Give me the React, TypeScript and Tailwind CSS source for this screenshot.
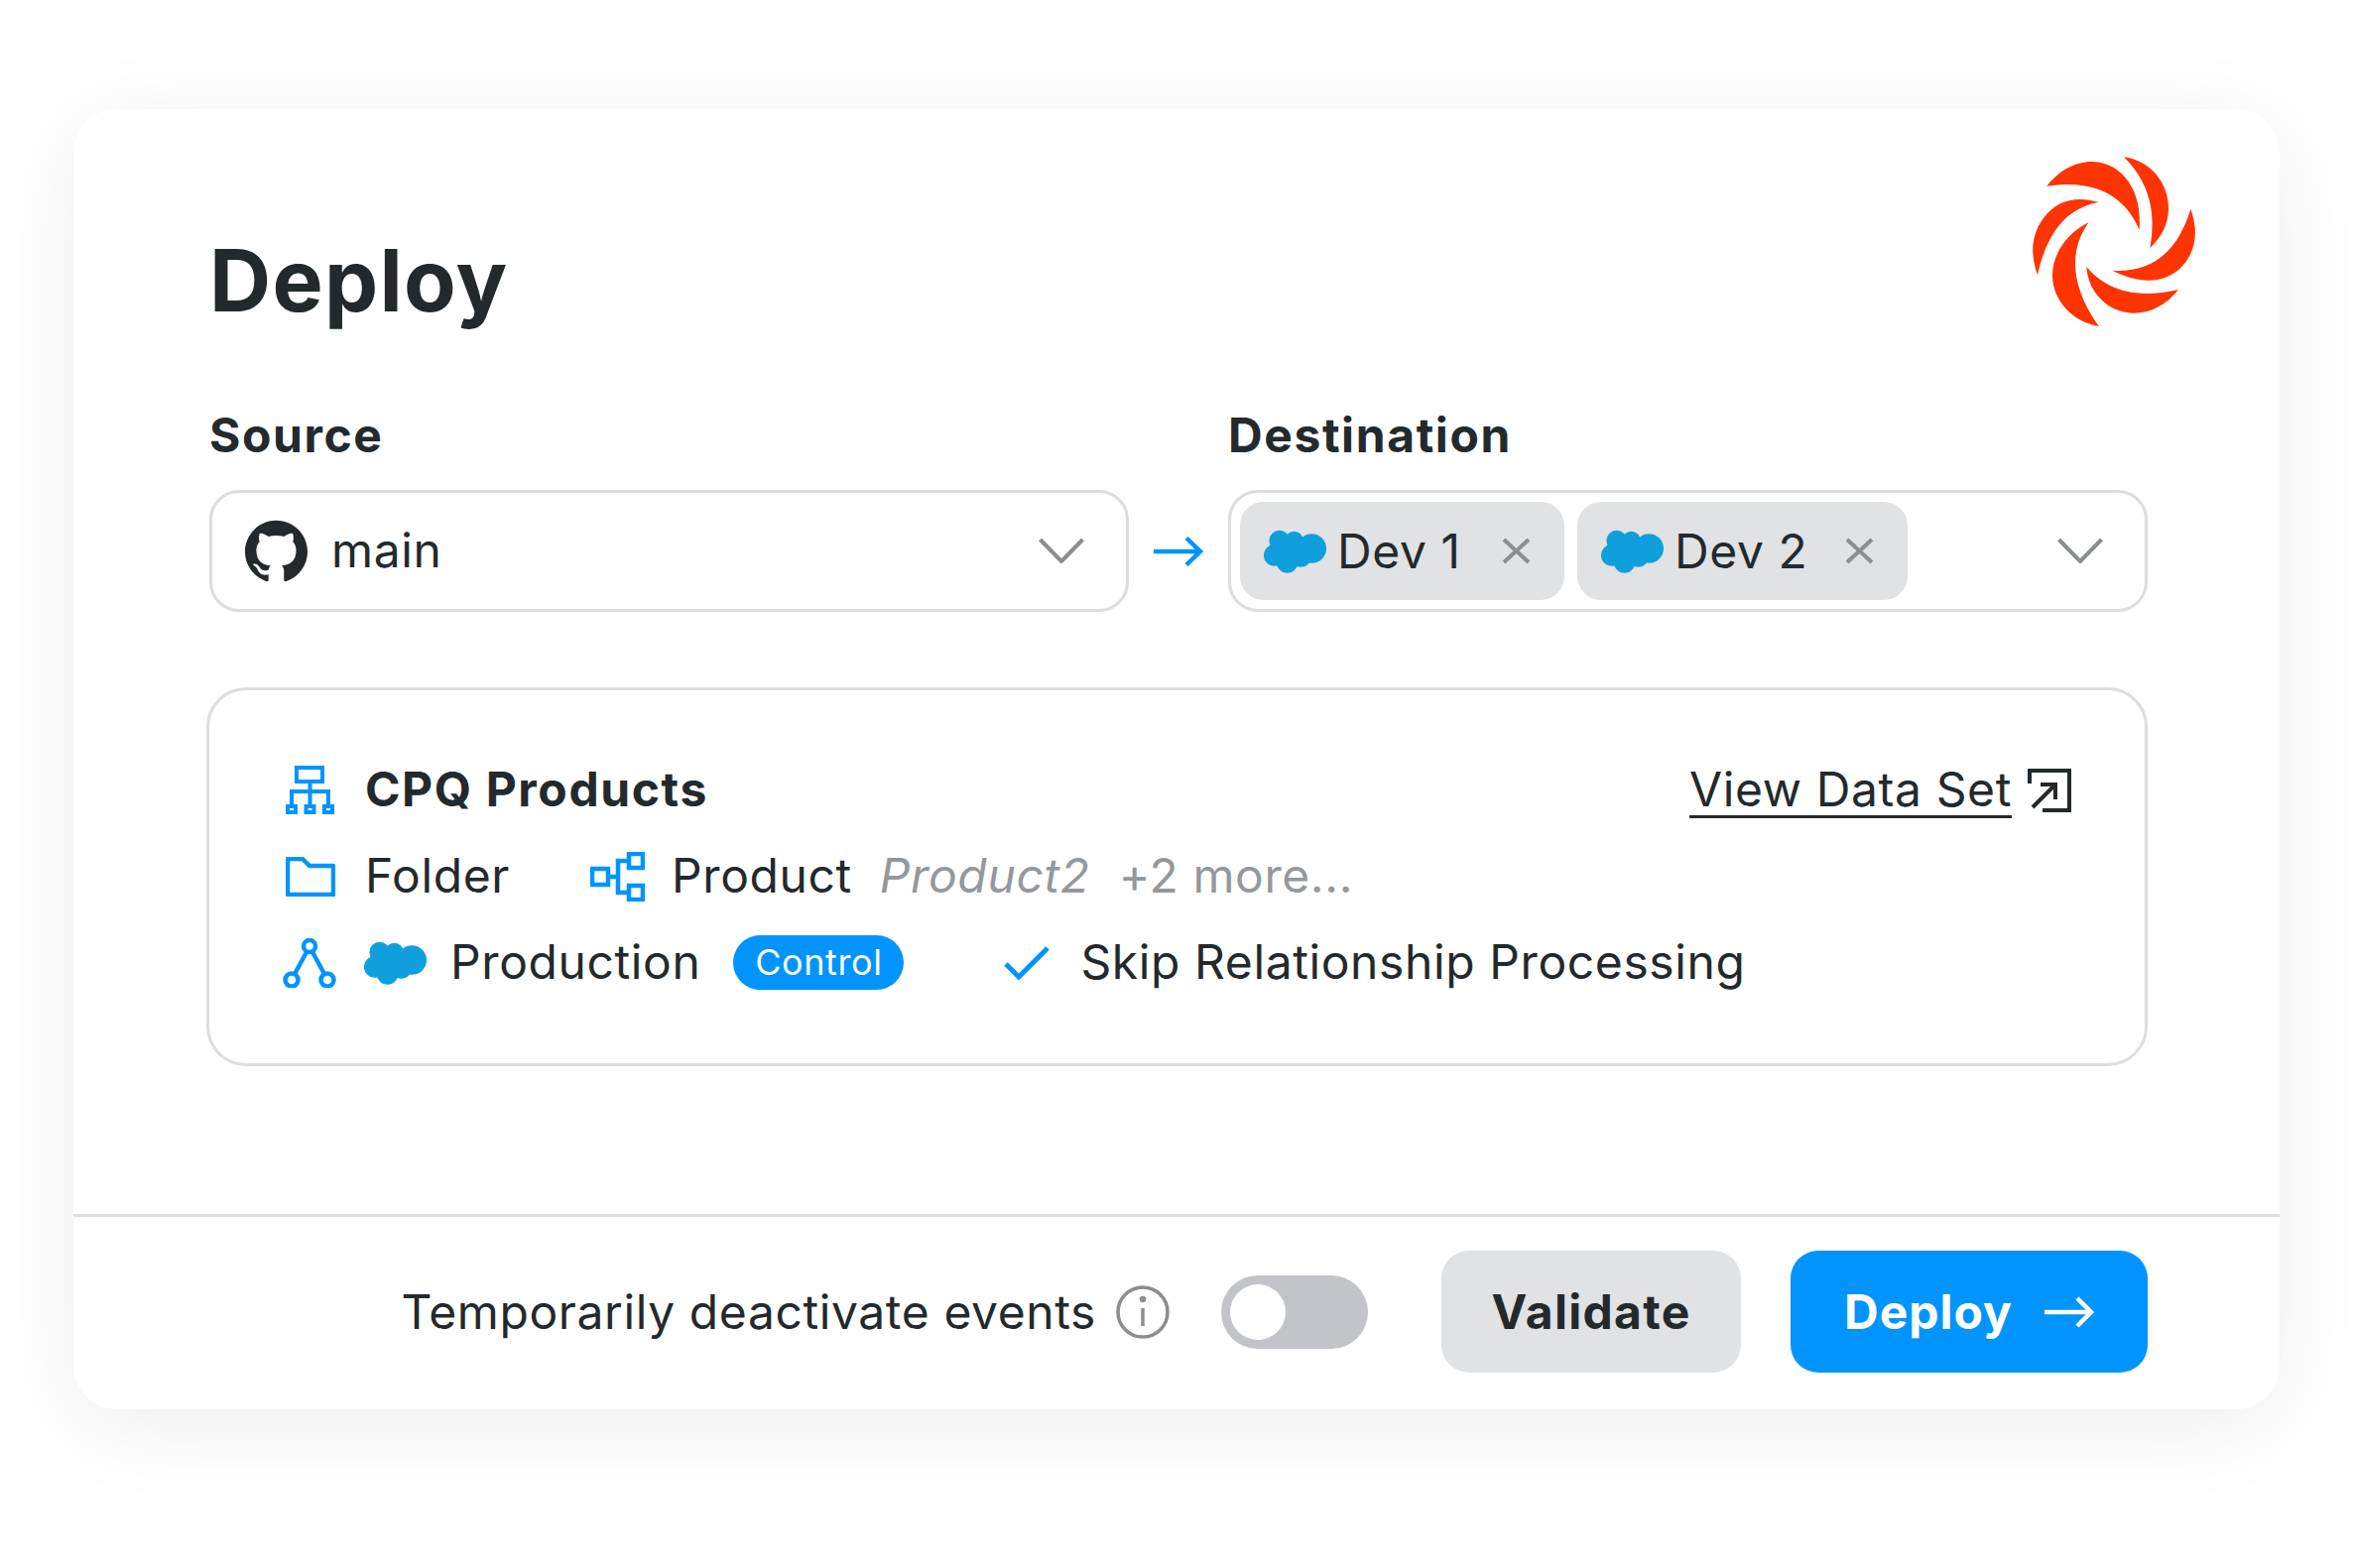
import React from "react";
import { SiGithub } from "react-icons/si";

const Cloud = ({ className = "" }: { className?: string }) => (
  <svg viewBox="0 0 64 44" className={className} fill="#109fdd">
    <circle cx="16" cy="11" r="10.5" />
    <circle cx="31" cy="11" r="9.5" />
    <circle cx="49" cy="19" r="15" />
    <circle cx="11" cy="26" r="11" />
    <circle cx="24" cy="33" r="11" />
    <circle cx="38" cy="27" r="11" />
    <circle cx="28" cy="21" r="14" />
  </svg>
);

const Chevron = () => (
  <svg viewBox="0 0 46 26" className="w-[46px] h-[26px] mb-[2px] shrink-0" fill="none" stroke="#8b8e91" strokeWidth="4">
    <path d="M1.5 2 L23 24 L44.5 2" />
  </svg>
);

const Close = () => (
  <svg viewBox="0 0 29 27" className="w-[29px] h-[27px] shrink-0" fill="none" stroke="#8b8e91" strokeWidth="4">
    <path d="M2 2 L27 25 M27 2 L2 25" />
  </svg>
);

const Chip = ({ label, className, gap }: { label: string; className: string; gap: string }) => (
  <div className={`h-[99px] rounded-[24px] bg-[#e1e2e4] flex items-center pl-[24px] ${className}`}>
    <Cloud className="w-[63px] h-[44px] shrink-0" />
    <span className={`ml-[11px] shrink-0 ${gap}`}>{label}</span>
    <Close />
  </div>
);

export default function App() {
  return (
    <div
      className="w-[2372px] h-[1581px] bg-white pt-[110px] pl-[74px] text-[#24292c] text-[48px] leading-[60px] tracking-[0.6px]"
      style={{ fontFamily: "Inter, 'Liberation Sans', sans-serif" }}
    >
      <div className="w-[2224px] h-[1311px] rounded-[44px] bg-white shadow-[0_16px_90px_rgba(0,0,0,0.07)] flex flex-col">
        <div className="pt-[40px] pl-[137px] pr-[133px] flex-1">
          <div className="flex justify-between h-[266px]">
            <h1 className="mt-[83px] text-[86px] leading-[100px] font-bold tracking-[1.3px]">Deploy</h1>
            <svg viewBox="0 0 960 720" className="w-[320px] h-[240px] -mt-[30px] -mr-[105px] shrink-0" fill="#ff3403">
              <path d="M340 203 C385 145 440 128 480 129 C570 132 630 220 620 335 C590 265 520 175 340 203Z" />
              <path d="M573 115 C650 125 708 190 708 270 C708 320 685 360 652 390 C665 320 670 210 573 115Z" />
              <path d="M775 272 C800 340 790 400 750 445 C700 500 620 500 538 458 C640 465 730 420 775 272Z" />
              <path d="M738 516 C700 565 650 588 600 587 C525 585 465 525 460 447 C510 505 590 550 738 516Z" />
              <path d="M497 627 C420 615 358 550 357 475 C356 410 400 345 467 312 C415 385 400 490 497 627Z" />
              <path d="M312 472 C290 410 292 350 330 300 C370 245 430 232 497 252 C420 265 345 320 312 472Z" />
            </svg>
          </div>

          <div className="grid grid-cols-[927px_927px] gap-x-[100px] mt-[-7px]">
            <div className="font-bold tracking-[1.6px]">Source</div>
            <div className="font-bold tracking-[1.6px]">Destination</div>
          </div>

          <div className="flex items-center mt-[25px]">
            <div className="w-[927px] h-[123px] border-[3px] border-[#dcdddf] rounded-[30px] flex items-center pl-[33px] pr-[42px]">
              <SiGithub className="w-[63px] h-[63px] shrink-0" />
              <span className="ml-[24px] mb-[2px] flex-1">main</span>
              <Chevron />
            </div>
            <svg viewBox="0 0 50 30" className="w-[50px] h-[30px] mx-[25px] shrink-0" fill="none" stroke="#0094ff" strokeWidth="4.5">
              <path d="M0 15 H47 M33 1.5 L47 15 L33 28.5" />
            </svg>
            <div className="w-[927px] h-[123px] border-[3px] border-[#dcdddf] rounded-[30px] flex items-center pl-[9px] pr-[42px]">
              <Chip label="Dev 1" className="w-[327px]" gap="w-[166px]" />
              <Chip label="Dev 2" className="w-[333px] ml-[13px]" gap="w-[172px]" />
              <div className="flex-1" />
              <Chevron />
            </div>
          </div>

          <div className="-ml-[3px] mt-[76px] h-[382px] w-[1957px] border-[3px] border-[#dcdddf] rounded-[40px] pt-[57px] pl-[77px] pr-[74px]">
            <div className="flex items-center h-[87px]">
              <svg viewBox="0 0 50 50" className="w-[50px] h-[50px] shrink-0" fill="none" stroke="#0094ff" strokeWidth="4">
                <rect x="11" y="2" width="26" height="14" />
                <path d="M24.5 16 V26 M6 39 V26 H43 V39 M24.5 26 V39" />
                <rect x="2" y="41" width="8" height="6" />
                <rect x="20.5" y="41" width="8" height="6" />
                <rect x="39" y="41" width="8" height="6" />
              </svg>
              <span className="ml-[30px] mb-[2px] font-bold tracking-[1.6px] flex-1">CPQ Products</span>
              <span className="mb-[2px] underline underline-offset-[9px] decoration-[3px]">View Data Set</span>
              <svg viewBox="0 0 44 44" className="w-[44px] h-[44px] ml-[16px] shrink-0" fill="none" stroke="#24292c" strokeWidth="4">
                <path d="M2 15 V2 H42 V42 H15" />
                <path d="M5 39 L27 17 M13 16 H28 V31" />
              </svg>
            </div>

            <div className="flex items-center h-[87px]">
              <svg viewBox="0 0 50 40" className="w-[50px] h-[40px] shrink-0" fill="none" stroke="#0094ff" strokeWidth="4.5">
                <path d="M2 38 V2 H17 L24 9 H48 V38 Z" strokeLinejoin="round" />
              </svg>
              <span className="ml-[30px] mb-[2px] w-[227px] shrink-0">Folder</span>
              <svg viewBox="0 0 55 50" className="w-[55px] h-[50px] shrink-0" fill="none" stroke="#0094ff" strokeWidth="4.5">
                <rect x="2" y="17" width="16" height="16" />
                <rect x="39" y="2" width="14" height="14" />
                <rect x="39" y="34" width="14" height="14" />
                <path d="M18 25 H28 M39 9 H28 V41 H39" />
              </svg>
              <span className="ml-[27px] mb-[2px]">Product</span>
              <span className="ml-[28px] mb-[2px] italic text-[#95989b]">Product2</span>
              <span className="ml-[29px] mb-[2px] text-[#95989b]">+2 more...</span>
            </div>

            <div className="flex items-center h-[87px]">
              <svg viewBox="0 0 54 50" className="w-[54px] h-[50px] -ml-[3px] shrink-0" fill="none" stroke="#0094ff" strokeWidth="4.5">
                <circle cx="27" cy="8" r="6" />
                <circle cx="9" cy="42" r="6.5" />
                <circle cx="45" cy="42" r="6.5" />
                <path d="M24 14 L12 36 M30 14 L42 36" />
              </svg>
              <Cloud className="w-[63px] h-[44px] ml-[28px] shrink-0" />
              <span className="ml-[24px] mb-[2px]">Production</span>
              <span className="ml-[33px] w-[172px] h-[55px] rounded-full bg-[#0094ff] text-white text-[36px] leading-[55px] text-center shrink-0">Control</span>
              <svg viewBox="0 0 46 34" className="w-[46px] h-[34px] ml-[101px] shrink-0" fill="none" stroke="#0094ff" strokeWidth="5">
                <path d="M2 18 L15 31 L44 2" />
              </svg>
              <span className="ml-[31px] mb-[2px]">Skip Relationship Processing</span>
            </div>
          </div>
        </div>

        <div className="h-[197px] pb-[3px] border-t-[3px] border-[#dcdddf] flex items-center justify-end pr-[133px]">
          <span className="mr-px">Temporarily deactivate events</span>
          <svg viewBox="0 0 54 54" className="w-[54px] h-[54px] ml-[19px] shrink-0" fill="none" stroke="#8b8e91" strokeWidth="3.5">
            <circle cx="27" cy="27" r="25" />
            <path d="M27 23 V41" />
            <circle cx="27" cy="14" r="1.5" fill="#8b8e91" />
          </svg>
          <div className="ml-[52px] w-[148px] h-[74px] rounded-full bg-[#c2c4c7] flex items-center pl-[9px] shrink-0">
            <div className="w-[56px] h-[56px] rounded-full bg-white" />
          </div>
          <button className="ml-[74px] w-[302px] h-[123px] rounded-[28px] bg-[#e1e2e4] font-bold tracking-[1.3px]">Validate</button>
          <button className="ml-[50px] w-[360px] h-[123px] rounded-[28px] bg-[#0094ff] text-white font-bold tracking-[1px] flex items-center justify-center">
            Deploy
            <svg viewBox="0 0 50 32" className="w-[50px] h-[32px] ml-[32px] shrink-0" fill="none" stroke="#ffffff" strokeWidth="4.5">
              <path d="M0 16 H47 M33 2 L47 16 L33 30" />
            </svg>
          </button>
        </div>
      </div>
    </div>
  );
}
